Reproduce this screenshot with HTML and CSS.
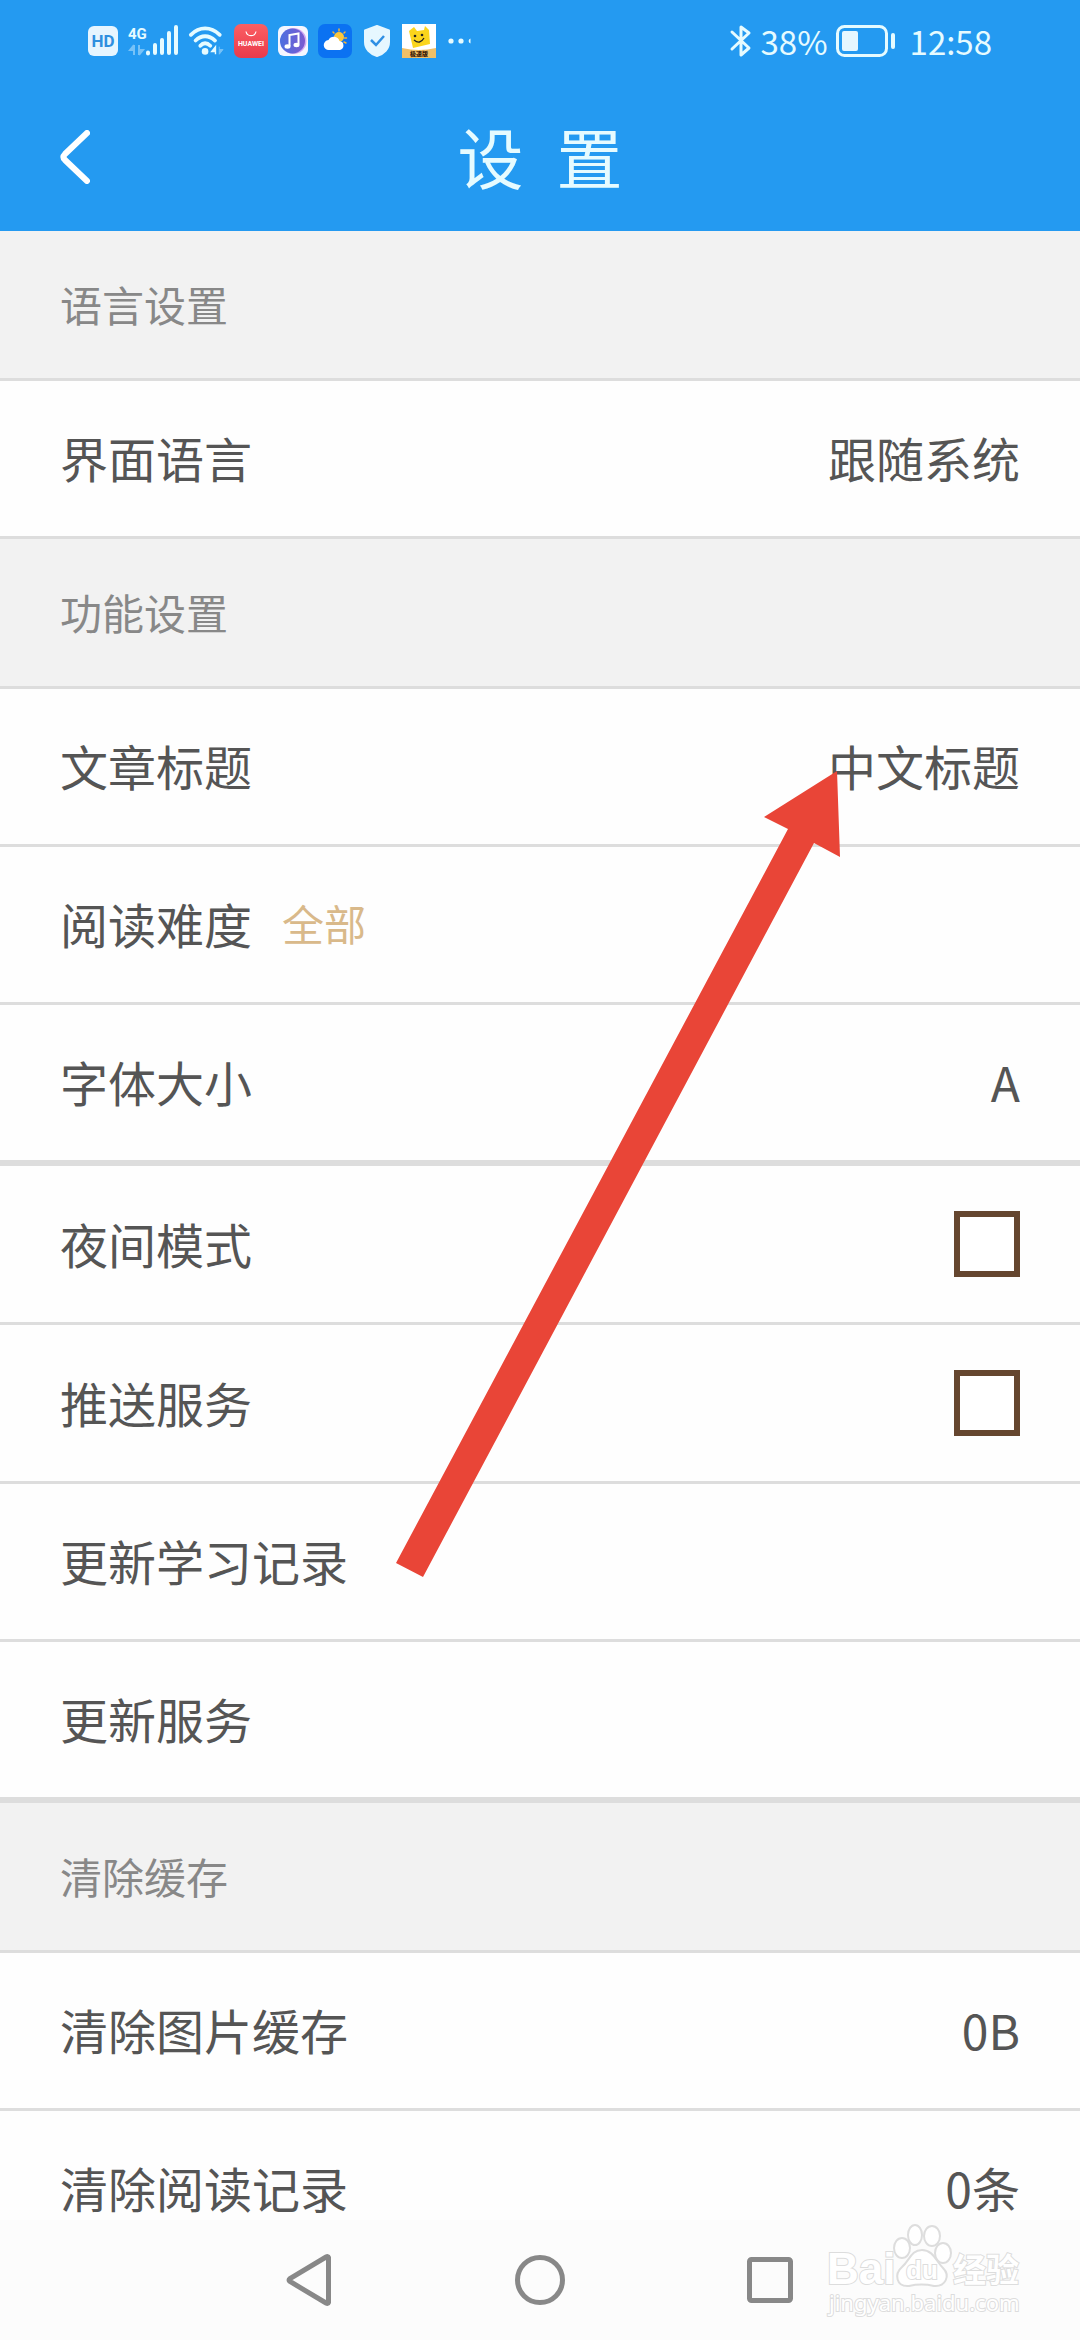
FILE: index.html
```html
<!DOCTYPE html>
<html lang="zh-CN">
<head>
<meta charset="utf-8">
<meta name="viewport" content="width=device-width, initial-scale=1">
<title>设置</title>
<link rel="stylesheet" href="styles.css">
</head>
<body>
<div class="app">
  <header class="header">
    <div class="status">
      <div class="status-group status-left">
        <svg width="30" height="30" viewBox="0 0 30 30" aria-hidden="true">
          <rect width="30" height="30" rx="6" fill="#e6f5ff"/>
          <text class="icon-text" x="15" y="21" font-size="17" font-weight="700" fill="#2f8fdf" text-anchor="middle">HD</text>
        </svg>
        <svg width="50" height="34" viewBox="0 0 50 34" aria-hidden="true">
          <text class="icon-text" x="0" y="15" font-size="15" font-weight="700" fill="#e6fbff">4G</text>
          <path d="M6 21v10M6 21l-4 5h4M11 21v10M11 31l4-5h-4" stroke="#77c2f7" stroke-width="2" fill="#77c2f7"/>
          <g stroke="#e6fbff" stroke-width="4" stroke-linecap="round"><path d="M20 28.500v1M27 21v8M34 16v13M41 9v20M48 3v26"/></g>
        </svg>
        <svg width="36" height="34" viewBox="0 0 38 34" aria-hidden="true">
          <g fill="none" stroke="#e6fbff" stroke-width="4" stroke-linecap="round"><path d="M3 10.500C12 1.500 24 1.500 33.500 10.500"/><path d="M8 16.500C14 10.500 22 10.500 28.500 16.500"/><path d="M13 22C16 18.500 20 18.500 23.500 22"/></g>
          <circle cx="18" cy="28" r="3.500" fill="#e6fbff"/>
          <path d="M29 31v-8l-4 5h4" fill="#e6fbff" stroke="#e6fbff" stroke-width="1.500"/><path d="M33 23v8l4-5h-4" fill="#77c2f7" stroke="#77c2f7"/>
        </svg>
        <svg width="34" height="34" viewBox="0 0 34 34" aria-hidden="true">
          <defs><linearGradient id="store" x2="0" y2="1"><stop stop-color="#fb5f63"/><stop offset="1" stop-color="#e93a4b"/></linearGradient></defs>
          <rect width="34" height="34" rx="7" fill="url(#store)"/>
          <path d="M12 7.500C13 13 21 13 22 7.500" fill="none" stroke="#fff" stroke-width="1.200"/>
          <text class="icon-text" x="17" y="22" font-size="7" font-weight="700" fill="#fff" text-anchor="middle">HUAWEI</text>
        </svg>
        <svg width="30" height="30" viewBox="0 0 30 30" aria-hidden="true">
          <defs><linearGradient id="music"><stop stop-color="#4c6fe0"/><stop offset="1" stop-color="#7b5bd0"/></linearGradient></defs>
          <rect width="30" height="30" rx="6" fill="#f5f6ff"/>
          <circle cx="15.500" cy="15" r="13" fill="#d3aaf2"/><circle cx="14.500" cy="15" r="12.500" fill="url(#music)"/>
          <path d="M11.500 20V9l9-1.500v11" fill="none" stroke="#fff" stroke-width="2"/><ellipse cx="9.500" cy="20.500" rx="3" ry="2.200" fill="#fff"/><ellipse cx="18.500" cy="19" rx="3" ry="2.200" fill="#fff"/>
        </svg>
        <div class="status-group status-notices">
          <svg width="34" height="34" viewBox="0 0 34 34" aria-hidden="true">
            <rect width="34" height="34" rx="7" fill="#0b72f2"/>
            <g stroke="#f3b53a" stroke-width="1.500" stroke-linecap="round"><path d="M21 5v2M27 8l-1 1M28.500 14h-2M28 19l-2-1M15 8l1 1"/></g>
            <circle cx="21" cy="13" r="5" fill="#fbc73d"/>
            <path d="M11 26a5 5 0 0 1-.5-10A6 6 0 0 1 21.500 17a4.600 4.600 0 0 1 .5 9z" fill="#fff"/>
          </svg>
          <svg width="26" height="32" viewBox="0 0 26 32" aria-hidden="true">
            <path d="M13 1 25 5.500V17C25 24 20 29 13 31 6 29 1 24 1 17V5.500z" fill="#e6f7ff" stroke="#e6f7ff" stroke-width="2" stroke-linejoin="round"/>
            <path d="M7 15l5 5 8-9" fill="none" stroke="#2f8fe4" stroke-width="2.500"/>
          </svg>
          <svg width="34" height="34" viewBox="0 0 34 34" aria-hidden="true">
            <rect width="34" height="34" fill="#fff"/>
            <path d="M7 7l5-4 3 4 7-1 1-4 4 4 1 14-17 4z" fill="#fbd51c"/>
            <circle cx="13" cy="12" r="1.300" fill="#222"/><circle cx="20" cy="11" r="1.300" fill="#222"/><path d="M12 16q6 5 10-2" stroke="#222" stroke-width="1.300" fill="none"/>
            <path d="M0 24Q17 28 34 24V34H0z" fill="#f0c067"/>
            <text class="icon-text" x="17" y="32" font-size="6" font-weight="900" fill="#3a1a08" text-anchor="middle">极速版</text>
          </svg>
          <svg width="24" height="8" viewBox="0 0 24 8" aria-hidden="true"><g fill="#e6fbff"><circle cx="3" cy="4" r="2.600"/><circle cx="13" cy="4" r="2.600"/><path d="M22.500 1.500v5a2.600 2.600 0 0 1 0-5"/></g></svg>
        </div>
      </div>
      <div class="status-group status-right">
        <svg width="24" height="34" viewBox="0 0 24 34" aria-hidden="true"><path d="M3 8l17 16-8 7V3l8 6L3 25" fill="none" stroke="#e6fbff" stroke-width="3" stroke-linejoin="round" stroke-linecap="round"/></svg>
        <span>38%</span>
        <svg width="60" height="32" viewBox="0 0 60 32" aria-hidden="true"><rect x="1.500" y="1.500" width="49" height="29" rx="7" fill="none" stroke="#e6fbff" stroke-width="3"/><rect x="6" y="6" width="16" height="20" rx="2" fill="#e6f7ff"/><rect x="55" y="8" width="4" height="16" rx="2" fill="#e6fbff"/></svg>
        <time>12:58</time>
      </div>
    </div>
    <div class="titlebar">
      <button class="back" type="button" aria-label="返回"><svg width="30" height="54" viewBox="0 0 30 54" aria-hidden="true"><path d="M27 3 5 24Q2 27 5 30L27 51" fill="none" stroke="#fff" stroke-width="6" stroke-linecap="round"/></svg></button>
      <h1 class="title">设&ensp;置</h1>
    </div>
  </header>

  <main class="settings">
    <h2 class="section">语言设置</h2>
    <button class="row" type="button"><span>界面语言</span><span class="value">跟随系统</span></button>
    <h2 class="section">功能设置</h2>
    <button class="row" type="button"><span>文章标题</span><span class="value">中文标题</span></button>
    <button class="row" type="button"><span>阅读难度</span><span class="level">全部</span></button>
    <button class="row row-last" type="button"><span>字体大小</span><span class="value">A</span></button>
    <label class="row row-check"><span>夜间模式</span><input class="check" type="checkbox"></label>
    <label class="row row-check"><span>推送服务</span><input class="check" type="checkbox"></label>
    <button class="row" type="button"><span>更新学习记录</span></button>
    <button class="row row-last" type="button"><span>更新服务</span></button>
    <h2 class="section">清除缓存</h2>
    <button class="row" type="button"><span>清除图片缓存</span><span class="value">0B</span></button>
    <button class="row" type="button"><span>清除阅读记录</span><span class="value">0条</span></button>
  </main>

  <nav class="nav">
    <button type="button" aria-label="返回"><svg width="50" height="54" viewBox="0 0 50 54" aria-hidden="true"><path d="M43.500 4.500V49.500Q43 51 41 50L5 28.500Q3 27 5 25.500L41 4Q43 3 43.500 4.500z"/></svg></button>
    <button type="button" aria-label="主页"><svg width="50" height="50" viewBox="0 0 50 50" aria-hidden="true"><circle cx="25" cy="25" r="22.500"/></svg></button>
    <button type="button" aria-label="最近任务"><svg width="46" height="46" viewBox="0 0 46 46" aria-hidden="true"><rect x="2.500" y="2.500" width="41" height="41" rx="2"/></svg></button>
    <svg class="watermark" width="200" height="104" viewBox="0 0 200 104" aria-hidden="true">
      <text class="mark-latin" x="3" y="64" font-size="44">Bai</text>
      <g><ellipse cx="78" cy="28" rx="8" ry="10"/><ellipse cx="91" cy="15" rx="7" ry="10"/><ellipse cx="108" cy="16" rx="8" ry="10"/><ellipse cx="119" cy="33" rx="8" ry="10"/>
      <path d="M98 30C109 30 112 41 119 48 127 56 121 67 110 66 101 64 94 64 85 66 72 67 70 54 78 47 86 40 87 30 98 30z"/></g>
      <text class="mark-latin" x="82" y="59" font-size="26">du</text>
      <text class="mark-cjk" x="129" y="62" font-size="33">经验</text>
      <text class="mark-url" x="5" y="91" font-size="22">jingyan.baidu.com</text>
    </svg>
  </nav>

  <svg class="arrow" width="446" height="808" viewBox="0 0 446 808" aria-hidden="true"><path d="M441 1 368 47 392 59 0 793 27 807 418 73 444 87z" fill="#e94537"/></svg>
</div>
</body>
</html>
```

FILE: styles.css
```css
* {
  box-sizing: border-box;
}

body {
  margin: 0;
  font-family: "Noto Sans CJK SC", sans-serif;
  color: #555;
  background: #fefefe;
}

button {
  margin: 0;
  padding: 0;
  border: 0;
  background: none;
  font: inherit;
  color: inherit;
  text-align: left;
}

svg {
  display: block;
  flex: none;
}

.app {
  position: relative;
  display: flex;
  flex-direction: column;
  height: 100vh;
  overflow: hidden;
}

.header {
  flex: none;
  background: #249af1;
  color: #e6fbff;
}

.status {
  display: flex;
  justify-content: space-between;
  height: 82px;
  padding: 0 88px;
}

.status-group {
  display: flex;
  align-items: center;
}

.status-left {
  gap: 10px;
}

.status-notices {
  gap: 12px;
}

.status-right {
  gap: 8px;
  font-size: 33px;
  line-height: 40px;
}

.status-right time {
  padding-left: 6px;
}

.icon-text {
  font-family: "Roboto", "Noto Sans CJK SC", sans-serif;
}

.titlebar {
  display: grid;
  grid-template-columns: 1fr auto 1fr;
  align-items: center;
  height: 149px;
  padding: 0 60px;
}

.back {
  width: 30px;
}

.title {
  margin: 0;
  padding-bottom: 4px;
  font-size: 66px;
  line-height: 96px;
  font-weight: 400;
}

.settings {
  flex: 1;
  min-height: 0;
  overflow-y: auto;
  scrollbar-width: none;
}

.section {
  display: flex;
  align-items: center;
  height: 150px;
  margin: 0;
  padding: 0 60px 2px;
  border-bottom: 3px solid #ddd;
  background: #f2f2f2;
  color: #888;
  font-size: 42px;
  font-weight: 400;
}

.row {
  display: flex;
  align-items: center;
  gap: 30px;
  width: 100%;
  height: 158px;
  padding: 0 60px;
  border-bottom: 3px solid #ddd;
  font-size: 48px;
  line-height: 56px;
}

.row span {
  padding-bottom: 3px;
}

.row-check {
  height: 159px;
}

.row-last {
  height: 161px;
  border-bottom-width: 6px;
}

.value,
.check {
  margin: 0 0 0 auto;
}

.level {
  color: #d9b98a;
  font-size: 42px;
}

.check {
  appearance: none;
  width: 66px;
  height: 66px;
  border: 6px solid #65462f;
  background: #fff;
}

.check:checked {
  background: #65462f;
  box-shadow: inset 0 0 0 8px #fff;
}

.nav {
  position: relative;
  flex: none;
  display: grid;
  grid-template-columns: repeat(3, 1fr);
  place-items: center;
  height: 120px;
  padding: 0 18%;
  background: #fcfcfc;
}

.nav button svg {
  fill: none;
  stroke: #888;
  stroke-width: 5;
}

.watermark {
  position: absolute;
  right: 56px;
  top: 0;
  fill: #fff;
  stroke: #ddd;
  stroke-width: 2;
}

.watermark text {
  paint-order: stroke;
}

.mark-latin {
  font-family: "Liberation Sans", sans-serif;
  font-weight: 700;
}

.mark-cjk {
  font-family: "Noto Sans CJK SC", sans-serif;
  font-weight: 700;
}

.mark-url {
  font-family: "Noto Sans", sans-serif;
}

.arrow {
  position: absolute;
  left: 396px;
  top: 770px;
  pointer-events: none;
}
```
